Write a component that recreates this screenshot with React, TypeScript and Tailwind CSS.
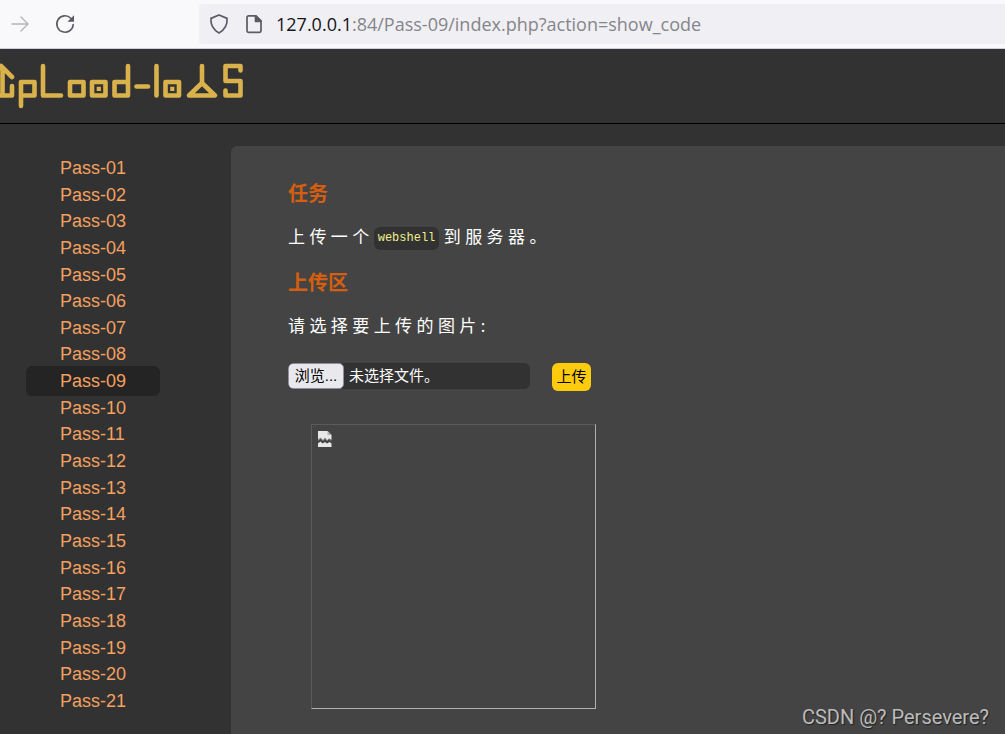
import React, { useState } from 'react';

const PASSES = Array.from({ length: 21 }, (_, i) => `Pass-${String(i + 1).padStart(2, '0')}`);

const ForwardIcon = () => (
    <svg className="h-5 w-5" viewBox="0 0 20 20" fill="none" stroke="#b4b4b9" strokeWidth="1.4" strokeLinecap="round" strokeLinejoin="round">
        <path d="M2 10h16M11 3l7 7-7 7" />
    </svg>
);

const ReloadIcon = () => (
    <svg className="h-5 w-5" viewBox="0 0 20 20" fill="none" stroke="#5b5b66" strokeWidth="1.6" strokeLinecap="round">
        <path d="M15.8 4.200A8.200 8.200 0 1 0 18.200 10.500" />
        <path d="M19 1.200v6.600h-6.600z" fill="#5b5b66" stroke="none" />
    </svg>
);

const ShieldIcon = () => (
    <svg className="h-5 w-5" viewBox="0 0 20 20" fill="none" stroke="#5b5b66" strokeWidth="1.7" strokeLinejoin="round">
        <path d="M10 1 18 4.4C18.6 11 15.6 15.8 10 19 4.4 15.8 1.4 11 2 4.4z" />
    </svg>
);

const PageIcon = () => (
    <svg className="h-5 w-5" viewBox="0 0 20 20" fill="none" stroke="#5b5b66" strokeWidth="1.7" strokeLinejoin="round">
        <path d="M4.5 1.8h7.5l5 5v10a1.5 1.5 0 0 1-1.5 1.5h-11a1.5 1.5 0 0 1-1.5-1.5V3.3a1.5 1.5 0 0 1 1.5-1.5z" />
        <path d="M11.5 1.8v5.500H17z" fill="#5b5b66" />
    </svg>
);

const Logo = () => (
    <svg className="h-[62px] w-[250px]" viewBox="0 0 250 62" role="img" aria-label="Upload-labs" fill="none" stroke="#d9b24c" strokeWidth="4.6" strokeLinecap="round" strokeLinejoin="round">
        <path d="M-4 17 1 12 12 23M2.500 14v27.500M-4 41.500h16V32" />
        <path d="M21 52V28h13.500v13.500H21" />
        <path d="M43 12v29.500h18" />
        <path d="M70 28h13.500v13.500H70z" />
        <path d="M92 28h13.500v13.500H92z" />
        <path d="M128 12v29.500h-13.500V28H128" />
        <path d="M136.500 32.500h11.500" />
        <path d="M156.500 12v29.500" />
        <path d="M165.500 28H179v13.500h-13.500z" />
        <path d="M202 12v17M202 29l13 12.500h-26z" />
        <path d="M240.500 16.500V12h-15v15h15v14.500h-15V36.500" />
        <path d="M96.700 32.700h4.200v4.200h-4.200zM170.200 32.700h4.200v4.200h-4.200z" fill="#d9b24c" stroke="none" />
    </svg>
);

const BrokenImageIcon = () => (
    <svg className="h-4 w-4" viewBox="0 0 16 16">
        <path d="M1 0h9.500l4 4v5l-2.500-1.500-2 2-2-2.500-2 2.500-2-2L1 9.500z" fill="#e8e8e8" />
        <path d="M10.500 0v4h4z" fill="#b0b0b0" />
        <path d="M1 9 3.500 7l2.500 3 2-2.500 2 2.500 2-2 2.500 2" stroke="#777" fill="none" />
        <path d="M1 12.500 3.500 10.500l2 2 2.500-1.500 2 1.500 2.500-1.500 2 1.500V16H1z" fill="#e8e8e8" />
    </svg>
);

const BrowserBar = () => (
    <div className="flex h-[49px] items-center border-b border-[#cfcfd8] bg-[#f9f9fb]">
        <button className="ml-[10px]" aria-label="Forward" disabled><ForwardIcon /></button>
        <button className="ml-[25px]" aria-label="Reload"><ReloadIcon /></button>
        <div className="ml-[124px] flex h-10 min-w-0 flex-1 items-center rounded-l bg-[#f0f0f4] pl-[10px]">
            <ShieldIcon />
            <span className="ml-[15px]"><PageIcon /></span>
            <p className="ml-3 truncate font-['Open_Sans','Noto_Sans',sans-serif] text-lg leading-6 text-[#85858b]">
                <span className="text-[#15141a]">127.0.0.1</span>:84/Pass-09/index.php?action=show_code
            </p>
        </div>
    </div>
);

const Sidebar = ({ active, onSelect }: { active: string; onSelect: (pass: string) => void }) => (
    <nav className="w-[231px] shrink-0 pl-[26px] pt-[9px]">
        <ul className="flex h-[559px] flex-col justify-between">
            {PASSES.map((pass) => (
                <li key={pass} className="text-lg leading-[26px]">
                    <a
                        href={`#${pass}`}
                        onClick={() => onSelect(pass)}
                        className={`rounded-md px-[34px] py-[5px] text-[#f4a060] ${pass === active ? 'bg-[#242424]' : ''}`}
                    >
                        {pass}
                    </a>
                </li>
            ))}
        </ul>
    </nav>
);

const UploadForm = () => {
    const [fileName, setFileName] = useState('');

    return (
        <form className="mt-[22px] flex items-start text-[15px] leading-[26px]" onSubmit={(e) => e.preventDefault()}>
            <label className="flex h-[26px] w-[242px] cursor-pointer items-center overflow-hidden rounded-md bg-[#323232]">
                <input
                    type="file"
                    className="sr-only"
                    onChange={(e) => setFileName(e.target.files?.[0]?.name ?? '')}
                />
                <span className="flex h-[26px] w-[56px] shrink-0 items-center justify-center rounded-[5px] border border-[#8f8f9d] bg-[#e9e9ed] text-black">浏览...</span>
                <span className="ml-[5px] truncate text-white">{fileName || '未选择文件。'}</span>
            </label>
            <button type="submit" className="ml-[22px] h-[28px] w-[39px] rounded-md bg-[#ffcc0d] text-black">上传</button>
        </form>
    );
};

const App: React.FC = () => {
    const [active, setActive] = useState('Pass-09');

    return (
        <div className="relative flex min-h-screen flex-col overflow-hidden bg-[#323232] font-['Liberation_Sans','Noto_Sans_CJK_SC',sans-serif]">
            <BrowserBar />
            <header className="h-[75px] border-b border-black pt-[5px]">
                <Logo />
            </header>
            <div className="flex flex-1 pt-[22px]">
                <Sidebar active={active} onSelect={setActive} />
                <main className="flex-1 rounded-tl-md bg-[#444444] pl-[57px] pt-[33px] text-white">
                    <h3 className="text-xl font-bold leading-[30px] text-[#d55f0e]">任务</h3>
                    <p className="mt-[13px] font-['Noto_Sans','Noto_Sans_CJK_SC',sans-serif] text-[17px] leading-[30px]">
                        上 传 一 个 <code className="inline-block rounded-md bg-[#323232] px-1 align-middle font-['Liberation_Mono',monospace] text-xs leading-[23px] text-[#f0f08c]">webshell</code> 到 服 务 器 。
                    </p>
                    <h3 className="mt-4 text-xl font-bold leading-[30px] text-[#d55f0e]">上传区</h3>
                    <p className="mt-[13px] font-['Noto_Sans','Noto_Sans_CJK_SC',sans-serif] text-[17px] leading-[30px]">请 选 择 要 上 传 的 图 片 :</p>
                    <UploadForm />
                    <div className="ml-[23px] mt-[33px] h-[285px] w-[285px] border border-b-[#b0b0b0] border-l-[#5a5a5a] border-r-[#b0b0b0] border-t-[#5a5a5a] pl-[5px] pt-[6px]">
                        <BrokenImageIcon />
                    </div>
                </main>
            </div>
            <p className="absolute bottom-[5px] right-4 font-['Roboto',sans-serif] text-xl leading-6 text-[#bcbcbc] [text-shadow:1px_1px_1px_#222]">CSDN @? Persevere?</p>
        </div>
    );
};

export default App;
